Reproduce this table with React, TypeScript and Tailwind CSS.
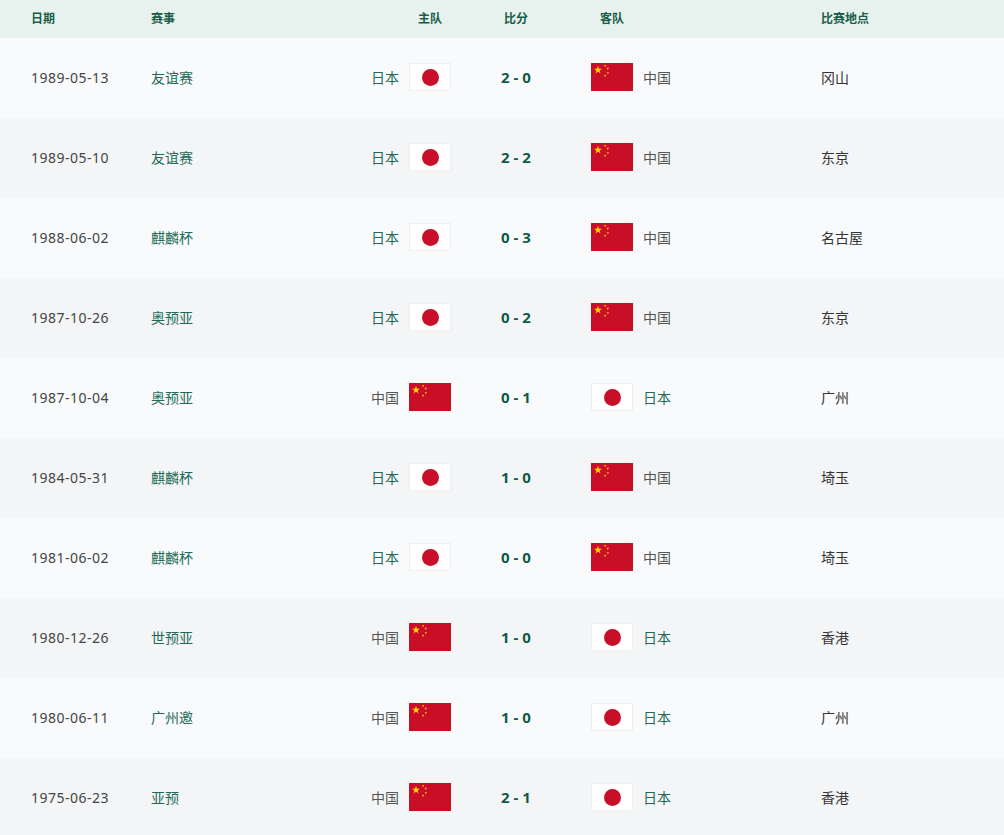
import React from "react";

type Team = "日本" | "中国";

const matches: { date: string; event: string; home: Team; score: string; away: Team; place: string }[] = [
  { date: "1989-05-13", event: "友谊赛", home: "日本", score: "2 - 0", away: "中国", place: "冈山" },
  { date: "1989-05-10", event: "友谊赛", home: "日本", score: "2 - 2", away: "中国", place: "东京" },
  { date: "1988-06-02", event: "麒麟杯", home: "日本", score: "0 - 3", away: "中国", place: "名古屋" },
  { date: "1987-10-26", event: "奥预亚", home: "日本", score: "0 - 2", away: "中国", place: "东京" },
  { date: "1987-10-04", event: "奥预亚", home: "中国", score: "0 - 1", away: "日本", place: "广州" },
  { date: "1984-05-31", event: "麒麟杯", home: "日本", score: "1 - 0", away: "中国", place: "埼玉" },
  { date: "1981-06-02", event: "麒麟杯", home: "日本", score: "0 - 0", away: "中国", place: "埼玉" },
  { date: "1980-12-26", event: "世预亚", home: "中国", score: "1 - 0", away: "日本", place: "香港" },
  { date: "1980-06-11", event: "广州邀", home: "中国", score: "1 - 0", away: "日本", place: "广州" },
  { date: "1975-06-23", event: "亚预", home: "中国", score: "2 - 1", away: "日本", place: "香港" },
];

function Star({ cx, cy, r, rot = 0 }: { cx: number; cy: number; r: number; rot?: number }) {
  const pts: string[] = [];
  for (let i = 0; i < 10; i++) {
    const rr = i % 2 === 0 ? r : r * 0.382;
    const a = ((-90 + rot + i * 36) * Math.PI) / 180;
    pts.push(`${(cx + rr * Math.cos(a)).toFixed(2)},${(cy + rr * Math.sin(a)).toFixed(2)}`);
  }
  return <polygon points={pts.join(" ")} fill="#ffde00" />;
}

function Flag({ team }: { team: Team }) {
  if (team === "日本") {
    return (
      <div className="w-[42px] h-[28px] bg-white border border-[#eef0f0] flex items-center justify-center shrink-0">
        <div className="w-[17px] h-[17px] rounded-full bg-[#c90f28]" />
      </div>
    );
  }
  return (
    <svg width="42" height="28" viewBox="0 0 30 20" className="shrink-0 block">
      <rect width="30" height="20" fill="#c90f28" />
      <Star cx={5} cy={5} r={3} />
      <Star cx={10} cy={2} r={1} rot={23} />
      <Star cx={12} cy={4} r={1} rot={45} />
      <Star cx={12} cy={7} r={1} rot={70} />
      <Star cx={10} cy={9} r={1} rot={20} />
    </svg>
  );
}

const teamColor = (t: Team) => (t === "日本" ? "text-[#1d6b57]" : "text-[#555]");

export default function App() {
  return (
    <div className="w-[1004px] min-h-screen bg-[#f4f5f6] font-['Noto_Sans','Noto_Sans_CJK_SC',sans-serif]">
      <div className="grid grid-cols-[151px_200px_100px_130px_240px_1fr] h-[38px] items-center bg-[#e7f2ee] text-[12px] font-bold text-[#1a5d49]">
        <div className="pl-[31px]">日期</div>
        <div>赛事</div>
        <div className="flex justify-end">
          <div className="w-[42px] text-center">主队</div>
        </div>
        <div className="text-center">比分</div>
        <div className="pl-[10px]">
          <div className="w-[42px] text-center">客队</div>
        </div>
        <div>比赛地点</div>
      </div>
      {matches.map((m, i) => (
        <div
          key={i}
          className={`grid grid-cols-[151px_200px_100px_130px_240px_1fr] h-[80px] pb-[2px] items-center text-[14px] ${i % 2 === 0 ? "bg-[#f9fafb]" : "bg-[#f4f5f6]"}`}
        >
          <div className="pl-[31px] text-[#444] tracking-[0.5px]">{m.date}</div>
          <div className="text-[#1d6b57]">{m.event}</div>
          <div className="flex items-center justify-end gap-[10px]">
            <span className={teamColor(m.home)}>{m.home}</span>
            <Flag team={m.home} />
          </div>
          <div className="text-center font-bold text-[15px] text-[#0f5a47]">{m.score}</div>
          <div className="flex items-center gap-[10px] pl-[10px]">
            <Flag team={m.away} />
            <span className={teamColor(m.away)}>{m.away}</span>
          </div>
          <div className="text-[#333]">{m.place}</div>
        </div>
      ))}
    </div>
  );
}
